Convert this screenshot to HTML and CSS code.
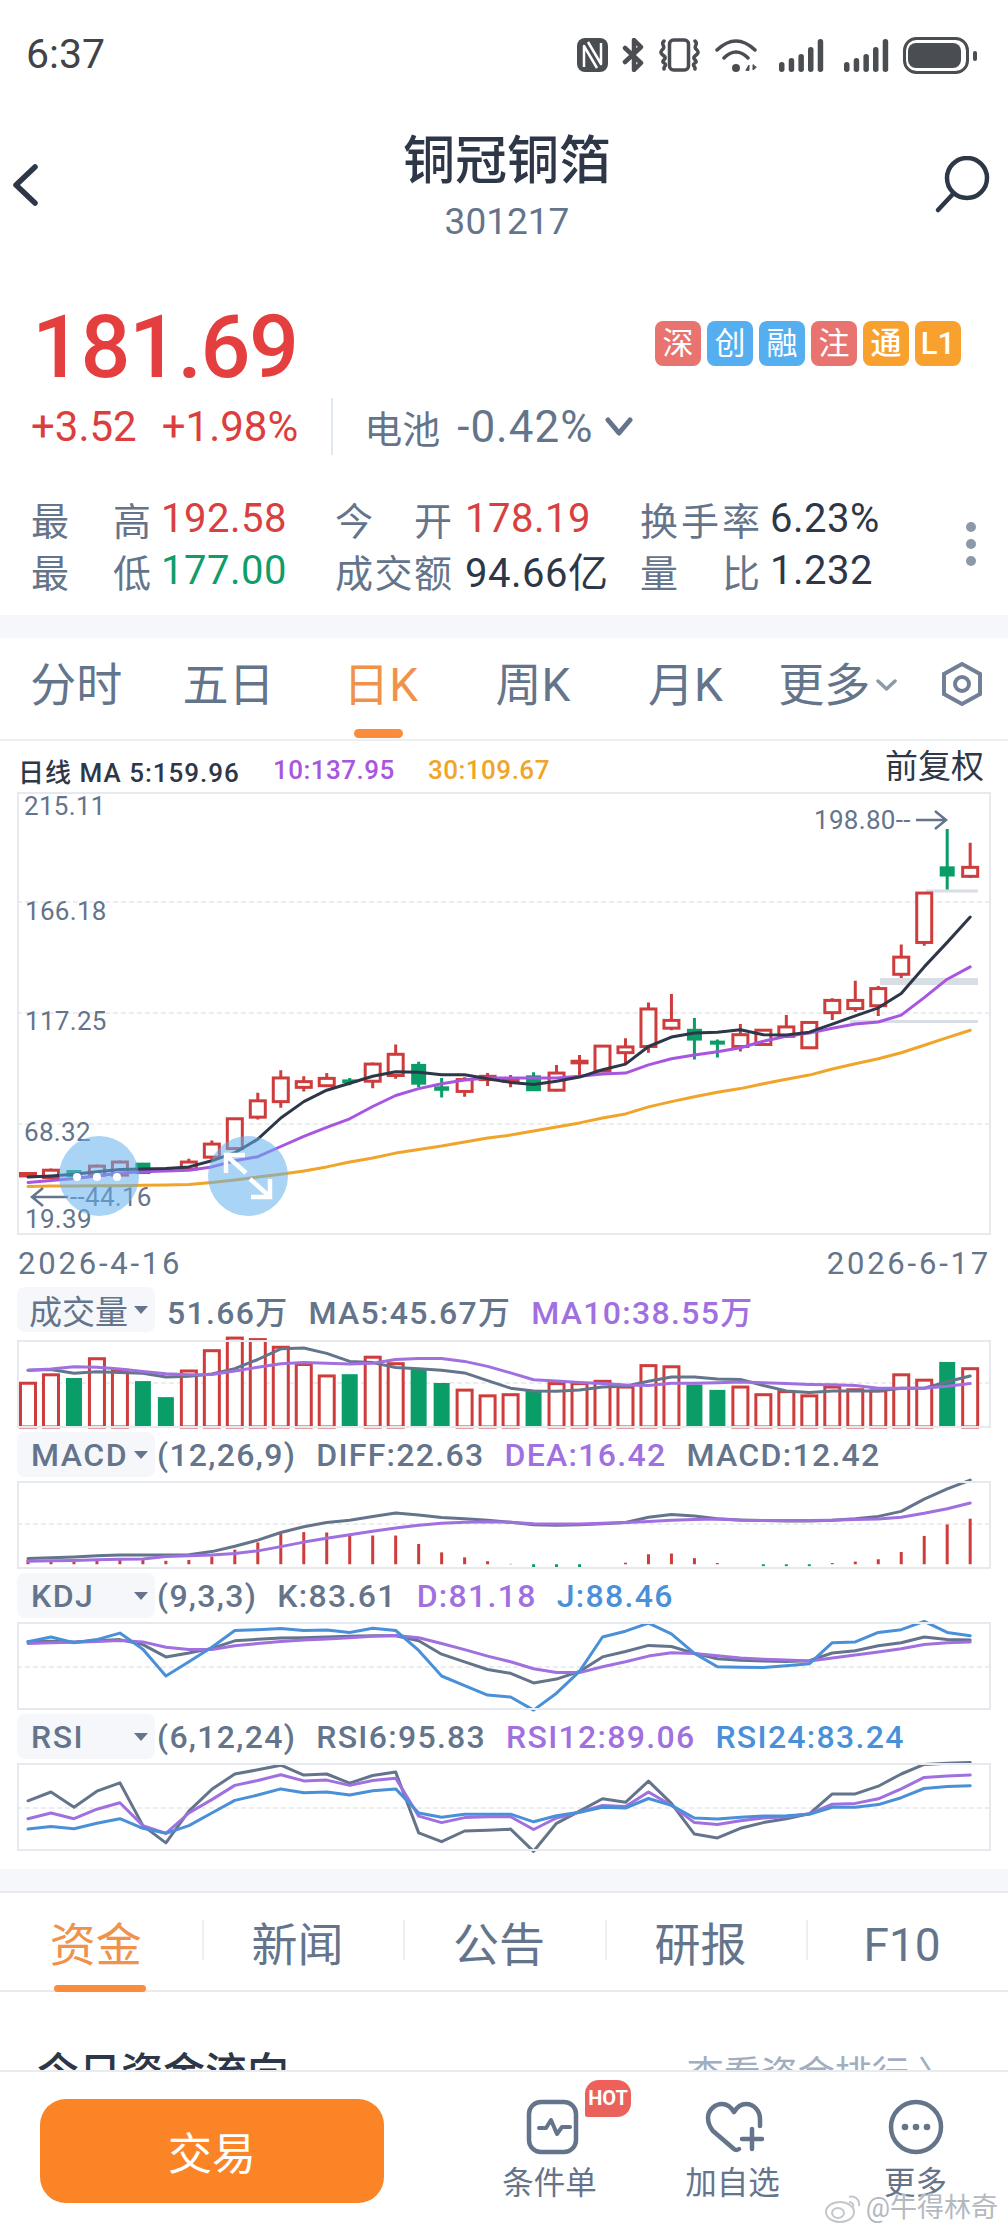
FILE: index.html
```html
<!DOCTYPE html>
<html lang="zh-CN">
<head>
<meta charset="utf-8">
<title>铜冠铜箔</title>
<link rel="stylesheet" href="styles.css">
</head>
<body>
<div class="page">
  <header class="status">
    <span class="clock">6:37</span>
    <div class="status-icons">
      <svg width="33" height="34" viewBox="0 0 33 34" class="nfc"><rect x="1" y="0" width="31" height="34" rx="8"/><path d="M8 29V8l13 22M25 5v21L12 4"/></svg>
      <svg width="24" height="34" viewBox="0 0 24 34" class="st heavy"><path d="M3 10l16 15-7 7V2l7 7L3 24"/></svg>
      <svg width="43" height="34" viewBox="0 0 43 34" class="st"><rect x="10.500" y="2" width="19" height="30" rx="4"/><path d="M5 3C1 6 7 8 4 11S1 15 5 18 1 23 5 25s-1 4 0 6M36 3c4 3-2 5 1 8s3 4-1 7 4 5 0 7 1 4 0 6"/></svg>
      <svg width="51" height="34" viewBox="0 0 51 34" class="st"><path d="M2 12Q21-6 40 12M9 20Q21 8 33 20"/><circle cx="21" cy="30" r="4" class="solid"/><path d="M31 32l3-5v5zM38 27v5l3-2.500z" class="hair"/></svg>
      <svg width="52" height="34" viewBox="0 0 52 34" class="bars"><rect x="0" y="24" width="5.500" height="10" rx="2.700"/><rect x="9.700" y="20" width="5.500" height="14" rx="2.700"/><rect x="19.400" y="16" width="5.500" height="18" rx="2.700"/><rect x="29" y="9" width="5.500" height="25" rx="2.700"/><rect x="38.700" y="1" width="5.500" height="33" rx="2.700"/></svg>
      <svg width="46" height="34" viewBox="0 0 46 34" class="bars"><rect x="0" y="24" width="5.500" height="10" rx="2.700"/><rect x="9.700" y="20" width="5.500" height="14" rx="2.700"/><rect x="19.400" y="16" width="5.500" height="18" rx="2.700"/><rect x="29" y="9" width="5.500" height="25" rx="2.700"/><rect x="38.700" y="1" width="5.500" height="33" rx="2.700"/></svg>
      <svg width="74" height="37" viewBox="0 0 74 37" class="batt"><rect x="1.500" y="1.500" width="63" height="34" rx="12" class="shell"/><rect x="5" y="6" width="53" height="25" rx="8"/><rect x="70" y="14" width="4" height="10" rx="2"/></svg>
    </div>
  </header>

  <nav class="nav">
    <div class="nav-side">
      <svg width="28" height="44" viewBox="0 0 28 44" class="back"><path d="M24 4L5 22l19 18"/></svg>
    </div>
    <div class="nav-title">
      <h1>铜冠铜箔</h1>
      <p>301217</p>
    </div>
    <div class="nav-side end">
      <svg width="56" height="58" viewBox="0 0 56 58" class="search"><circle cx="33" cy="22" r="20"/><path d="M19 38L4 54"/></svg>
    </div>
  </nav>

  <section class="quote">
    <div class="price-row">
      <div class="price">181.69</div>
      <div class="tags">
        <span class="tag red">深</span><span class="tag blue">创</span><span class="tag blue">融</span><span class="tag red">注</span><span class="tag amber">通</span><span class="tag amber">L1</span>
      </div>
    </div>
    <div class="change-row">
      <span class="up">+3.52</span>
      <span class="up pct">+1.98%</span>
      <i class="vline"></i>
      <span class="sector">电池</span>
      <span class="sector-val">-0.42%</span>
      <svg width="28" height="20" viewBox="0 0 28 20" class="drop"><path d="M3 3l11 13L25 3"/></svg>
    </div>
    <div class="stats-wrap">
      <div class="stats">
        <div class="cell c1"><span class="lab">最高</span><span class="val up">192.58</span></div>
        <div class="cell c2"><span class="lab">今开</span><span class="val up">178.19</span></div>
        <div class="cell c3"><span class="lab">换手率</span><span class="val dark">6.23%</span></div>
        <div class="cell c1"><span class="lab">最低</span><span class="val down">177.00</span></div>
        <div class="cell c2"><span class="lab">成交额</span><span class="val dark">94.66亿</span></div>
        <div class="cell c3"><span class="lab">量比</span><span class="val dark">1.232</span></div>
      </div>
      <div class="dots"><i></i><i></i><i></i></div>
    </div>
  </section>

  <div class="band"></div>

  <div class="tabs">
    <span class="tab">分时</span>
    <span class="tab">五日</span>
    <span class="tab on">日K</span>
    <span class="tab">周K</span>
    <span class="tab">月K</span>
    <span class="tab">更多<svg width="21" height="12" viewBox="0 0 21 12" class="tab-caret"><path d="M2 2l8.500 8L19 2"/></svg></span>
    <svg width="40" height="44" viewBox="0 0 40 44" class="hex"><path d="M20 2l18 10v20L20 42 2 32V12z"/><circle cx="20" cy="22" r="7"/></svg>
  </div>

  <section class="chart">
    <div class="ma-row">
      <span class="ma-main">日线 MA 5:159.96</span>
      <span class="ma-10">10:137.95</span>
      <span class="ma-30">30:109.67</span>
      <span class="adj">前复权</span>
    </div>
    <div class="frame">
      <svg id="kline" width="974" height="443" viewBox="17 792 974 443">
        <g class="grid"><path d="M17 902H991M17 1013H991M17 1124H991"/></g>
        <g class="levels"><path d="M926 891H978" class="lv slim"/><path d="M880 981.500H978" class="lv"/><path d="M850 1021.500H978" class="lv slim"/></g>
        <g id="candles"></g>
        <g id="malines"></g>
        <g class="axis">
          <text x="24" y="815">215.11</text>
          <text x="25" y="920">166.18</text>
          <text x="25" y="1030">117.25</text>
          <text x="24" y="1141">68.32</text>
          <text x="25" y="1228">19.39</text>
          <text x="814" y="829">198.80--</text>
          <text x="70" y="1206">--44.16</text>
        </g>
        <path d="M916 820H946M935 811l11 9-11 9M68 1197H32M43 1188l-11 9 11 9" class="arrow"/>
        <circle cx="99" cy="1176" r="40" class="bubble"/>
        <circle cx="248" cy="1176" r="40" class="bubble"/>
        <g class="bubble-dots"><circle cx="77" cy="1177" r="4"/><circle cx="97" cy="1177" r="4"/><circle cx="117" cy="1177" r="4"/></g>
        <path d="M226 1173v-18h19M228 1157l18 16M270 1179v18h-19M268 1195l-18-16" class="bubble-arrow"/>
      </svg>
    </div>
    <div class="dates"><span>2026-4-16</span><span>2026-6-17</span></div>

    <div class="ind-head vol">
      <div class="pill"><span>成交量</span><i class="caret"></i></div>
      <div class="ind-vals first">
        <span>51.66万</span><span>MA5:45.67万</span><span class="pu">MA10:38.55万</span>
      </div>
    </div>
    <div class="frame small"><svg id="volume" width="974" height="88" viewBox="17 1340 974 88"></svg></div>

    <div class="ind-head">
      <div class="pill latin"><span>MACD</span><i class="caret"></i></div>
      <div class="ind-vals">
        <span>(12,26,9)</span><span>DIFF:22.63</span><span class="pu">DEA:16.42</span><span>MACD:12.42</span>
      </div>
    </div>
    <div class="frame small"><svg id="macd" width="974" height="88" viewBox="17 1481 974 88"></svg></div>

    <div class="ind-head">
      <div class="pill latin"><span>KDJ</span><i class="caret"></i></div>
      <div class="ind-vals">
        <span>(9,3,3)</span><span>K:83.61</span><span class="pu">D:81.18</span><span class="bl">J:88.46</span>
      </div>
    </div>
    <div class="frame small"><svg id="kdj" width="974" height="88" viewBox="17 1622 974 88"></svg></div>

    <div class="ind-head">
      <div class="pill latin"><span>RSI</span><i class="caret"></i></div>
      <div class="ind-vals">
        <span>(6,12,24)</span><span>RSI6:95.83</span><span class="pu">RSI12:89.06</span><span class="bl">RSI24:83.24</span>
      </div>
    </div>
    <div class="frame small"><svg id="rsi" width="974" height="88" viewBox="17 1763 974 88"></svg></div>
  </section>

  <div class="band lower"></div>

  <div class="news-tabs">
    <span class="ntab on">资金</span>
    <span class="ntab">新闻</span>
    <span class="ntab">公告</span>
    <span class="ntab">研报</span>
    <span class="ntab">F10</span>
  </div>

  <section class="flow">
    <h2>今日资金流向</h2>
    <span class="flow-link">查看资金排行 〉</span>
  </section>

  <footer class="footer">
    <button class="trade">交易</button>
    <div class="act">
      <svg width="52" height="56" viewBox="0 0 52 56" class="ico shift"><rect x="5" y="3" width="47" height="50" rx="12"/><path d="M15 29h7l5-8 6 14 5-7h8" class="pulse"/></svg>
      <span>条件单</span>
      <b class="hot">HOT</b>
    </div>
    <div class="act">
      <svg width="58" height="56" viewBox="0 0 58 56" class="ico"><path d="M35 50q-3 2-5 0L9 32C5 27 4 23 4 19 4 11 11 5 18 5c5 0 9 3 12 8 3-5 7-8 12-8 8 0 14 7 14 15v7"/><path d="M48 30v20M38 40h20"/></svg>
      <span>加自选</span>
    </div>
    <div class="act">
      <svg width="56" height="56" viewBox="0 0 56 56" class="ico"><circle cx="28" cy="28" r="25"/><g class="more-dots"><circle cx="17" cy="28" r="3.300"/><circle cx="28" cy="28" r="3.300"/><circle cx="39" cy="28" r="3.300"/></g></svg>
      <span>更多</span>
    </div>
  </footer>

  <div class="mark">
    <svg width="36" height="30" viewBox="0 0 36 30" class="mark-logo"><ellipse cx="15" cy="19" rx="14" ry="10"/><ellipse cx="13" cy="20" rx="6" ry="5"/><path d="M24 4c6-2 11 3 10 9M24 9c3 0 5 2 4 5"/></svg>
    <span>@牛得林奇</span>
  </div>
</div>
<script src="chart.js"></script>
</body>
</html>
```
FILE: styles.css
```css
* { box-sizing: border-box; margin: 0; padding: 0; }
html, body { background: #fff; }
body {
  width: 1008px;
  font-family: Roboto, "Noto Sans CJK SC", sans-serif;
  color: #2d3748;
}
.page { position: relative; width: 1008px; height: 2232px; overflow: hidden; background: #fff; }

/* status bar */
.status { height: 108px; display: flex; justify-content: space-between; align-items: flex-start; padding: 30px 31px 0 26px; }
.clock { font-size: 41px; line-height: 48px; color: #3f444b; }
.status-icons { display: flex; gap: 13px; align-items: center; height: 48px; margin-top: 1px; }
.nfc rect { fill: #4a4d52; }
.nfc path { fill: none; stroke: #fff; stroke-width: 2.500; stroke-linejoin: round; }
.st { fill: none; stroke: #4a4d52; stroke-width: 3.500; stroke-linecap: round; stroke-linejoin: round; }
.st.heavy { stroke-width: 4.500; }
.st .solid { fill: #4a4d52; stroke: none; }
.st .hair { fill: #4a4d52; stroke-width: 1; }
.bars { fill: #4a4d52; }
.batt { fill: #4a4d52; }
.batt .shell { fill: none; stroke: #4a4d52; stroke-width: 3; }

/* nav */
.nav { height: 154px; display: flex; padding: 0 18px 0 11px; align-items: center; }
.nav-side { width: 67px; display: flex; }
.nav-side.end { width: 60px; justify-content: flex-end; }
.nav-title { flex: 1; text-align: center; padding: 24px 0 0 6px; align-self: flex-start; }
.nav-title h1 { font-size: 52px; line-height: 60px; font-weight: 500; color: #2d3748; }
.nav-title p { font-size: 37px; line-height: 44px; margin-top: 8px; color: #64748b; }
.back { fill: none; stroke: #2d3748; stroke-width: 5.500; stroke-linecap: round; stroke-linejoin: round; }
.search { fill: none; stroke: #2d3748; stroke-width: 4.500; stroke-linecap: round; }

/* quote */
.quote { height: 353px; padding-top: 33px; }
.price-row { height: 103px; display: flex; justify-content: space-between; align-items: center; padding: 0 47px 0 32px; }
.price { font-size: 88px; line-height: 100px; font-weight: 500; letter-spacing: -1.500px; color: #e53e3e; }
.tags { display: flex; gap: 6px; margin-top: -7px; }
.tag { width: 46px; height: 45px; border-radius: 8px; color: #fff; font-size: 31px; line-height: 45px; text-align: center; }
.tag.red { background: #e8736f; }
.tag.blue { background: #55aef0; }
.tag.amber { background: #f9a12f; font-weight: 500; }
.change-row { height: 57px; display: flex; align-items: center; padding-left: 31px; font-size: 42px; }
.up { color: #dc3d3d; }
.pct { margin-left: 25px; }
.vline { width: 2px; height: 57px; background: #e2e8f0; margin-left: 33px; }
.sector { margin-left: 31px; font-size: 38px; color: #64748b; }
.sector-val { margin-left: 17px; font-size: 44px; letter-spacing: 1px; color: #64748b; }
.drop { margin-left: 12px; fill: none; stroke: #64748b; stroke-width: 5; stroke-linecap: round; stroke-linejoin: round; }
.stats-wrap { display: flex; align-items: center; margin-top: 37px; padding: 0 32px 0 31px; }
.stats { flex: 1; display: grid; grid-template-columns: 304px 305px 1fr; grid-auto-rows: 52px; }
.cell { display: flex; align-items: center; gap: 10px; }
.lab { display: block; font-size: 38px; color: #64748b; text-align: justify; text-align-last: justify; }
.c1 .lab { width: 120px; }
.c2 { gap: 13px; }
.c2 .lab { width: 117px; }
.c3 { gap: 10px; }
.c3 .lab { width: 120px; }
.val { font-size: 40px; letter-spacing: .5px; white-space: nowrap; }
.up.val { color: #d84040; }
.down { color: #0f9d6a; }
.dark { color: #2d3748; }
.dots { display: flex; flex-direction: column; gap: 7px; }
.dots i { display: block; width: 10px; height: 10px; border-radius: 50%; background: #8c99a8; }

.band { height: 23px; background: #f5f7fa; }
.band.lower { height: 24px; margin-top: 18px; border-bottom: 2px solid #e8eaee; }

/* period tabs */
.tabs { height: 103px; display: flex; align-items: flex-start; padding-left: 0; border-bottom: 2px solid #edf0f3; }
.tab { position: relative; width: 152.300px; height: 100px; flex: none; text-align: center; font-size: 46px; line-height: 94px; color: #64748b; }
.tab.on { color: #f0924a; }
.tab.on::after { content: ""; position: absolute; left: 49px; bottom: 0; width: 49px; height: 9px; border-radius: 5px; background: #fb8c3c; }
.tab-caret { margin-left: 6px; vertical-align: 10px; fill: none; stroke: #8c99a8; stroke-width: 3.500; stroke-linecap: round; stroke-linejoin: round; }
.hex { margin: 24px 0 0 28px; fill: none; stroke: #718096; stroke-width: 4; }

/* chart */
.ma-row { height: 51px; display: flex; align-items: center; padding: 7px 24px 0 18px; font-size: 26px; letter-spacing: 1px; font-weight: 500; }
.ma-main { color: #2d3748; }
.ma-10, .ma-30 { letter-spacing: .5px; }
.ma-10 { margin-left: 33px; color: #a855e0; }
.ma-30 { margin-left: 33px; color: #f0a52a; }
.adj { margin-left: auto; margin-top: -13px; font-size: 33px; letter-spacing: 0; font-weight: 400; color: #2d3748; }

.frame { width: 974px; height: 443px; margin-left: 17px; outline: 2px solid #e6e9ee; outline-offset: -2px; }
.frame.small { height: 88px; }
.frame svg { display: block; overflow: visible; }
.grid path { fill: none; stroke: #e5e8ec; stroke-width: 1.500; stroke-dasharray: 5 3; }
.lv { fill: none; stroke: #d9dee4; stroke-width: 7; }
.lv.slim { stroke-width: 3; }
.axis text { font-size: 26px; letter-spacing: .3px; fill: #64748b; }
.arrow { fill: none; stroke: #64748b; stroke-width: 2.500; }
.bubble { fill: rgba(100, 176, 236, .55); }
.bubble-dots { fill: #fff; }
.bubble-arrow { fill: none; stroke: #fff; stroke-width: 4.500; }

.c-up { fill: #fff; stroke: #cf3c3c; stroke-width: 3; }
.c-dn { fill: #0b9d68; stroke: #0b9d68; stroke-width: 2; }
.wick-up { stroke: #cf3c3c; stroke-width: 3; fill: none; }
.wick-dn { stroke: #0b9d68; stroke-width: 3; fill: none; }
.line { fill: none; stroke-linejoin: round; stroke-linecap: round; stroke-width: 3; }
.l-black { stroke: #2d3748; stroke-width: 3; }
.l-ma10 { stroke: #a855e0; stroke-width: 3; }
.l-ma30 { stroke: #f0a52a; stroke-width: 3; }
.l-dark { stroke: #64748b; }
.l-purple { stroke: #a070e0; }
.l-blue { stroke: #4a90d9; }
.h-up { fill: #cf3c3c; }
.h-dn { fill: #0b9d68; }

.dates { height: 52px; display: flex; justify-content: space-between; align-items: center; padding: 4px 17px 0 18px; font-size: 31px; letter-spacing: 2.800px; color: #64748b; }
.ind-head { height: 53px; display: flex; align-items: flex-start; padding-top: 4px; }
.ind-head.vol { padding-top: 0; }
.pill { width: 138px; height: 45px; margin-left: 17px; flex: none; display: flex; align-items: center; justify-content: space-between; padding: 0 7px 0 12px; background: #f5f7fb; border-radius: 8px; font-size: 33px; color: #64748b; }
.pill.latin { padding-left: 14px; font-size: 32px; font-weight: 500; letter-spacing: 1.500px; }
.caret { width: 0; height: 0; border: 7px solid transparent; border-top: 8px solid #64748b; border-bottom: 0; }
.ind-vals { display: flex; gap: 20px; margin-left: 2px; height: 45px; align-items: center; font-size: 32px; font-weight: 500; letter-spacing: 1.300px; color: #64748b; white-space: nowrap; }
.ind-vals.first { margin-left: 12px; }
.pu { color: #a070e0; }
.bl { color: #4a90d9; }

/* news tabs */
.news-tabs { height: 99px; display: flex; border-bottom: 2px solid #e8eaee; }
.ntab { position: relative; flex: 1; height: 97px; padding-right: 10px; text-align: center; font-size: 46px; line-height: 104px; color: #64748b; }
.ntab + .ntab::before { content: ""; position: absolute; left: 0; top: 27px; width: 2px; height: 40px; background: #edf0f3; }
.ntab.on { color: #f0924a; }
.ntab.on::after { content: ""; position: absolute; left: 54px; bottom: -2px; width: 92px; height: 7px; border-radius: 4px; background: #fb8c3c; }

.flow { height: 78px; overflow: hidden; display: flex; justify-content: space-between; align-items: flex-start; padding: 52px 53px 0 37px; }
.flow h2 { font-size: 42px; line-height: 60px; font-weight: 500; color: #2d3748; }
.flow-link { font-size: 37px; line-height: 60px; margin-top: 2px; color: #a0aec0; }

/* footer */
.footer { height: 162px; display: flex; align-items: flex-start; border-top: 2px solid #e8ebef; padding: 27px 0 0 40px; background: #fff; }
.trade { width: 344px; height: 104px; border: 0; border-radius: 26px; background: #fb8427; color: #fff; font: 44px Roboto, "Noto Sans CJK SC", sans-serif; margin-right: 74px; }
.act { position: relative; width: 183px; flex: none; display: flex; flex-direction: column; align-items: center; font-size: 31.500px; line-height: 44px; color: #64748b; }
.act span { margin-top: 7px; }
.ico { overflow: visible; fill: none; stroke: #64748b; stroke-width: 4.500; stroke-linecap: round; stroke-linejoin: round; }
.ico .pulse { stroke-width: 4; }
.more-dots { fill: #64748b; stroke: none; }
.hot { position: absolute; left: 127px; top: -19px; width: 46px; height: 37px; background: linear-gradient(#f0605a, #e9625c); border-radius: 14px 14px 14px 2px; color: #fff; font-size: 20px; font-weight: 700; line-height: 37px; text-align: center; }

.mark { position: absolute; right: 10px; top: 2192px; display: flex; align-items: center; gap: 5px; font-size: 27px; line-height: 32px; color: #b4b9c0; text-shadow: 0 0 2px #fff, 0 0 3px #fff; }
.mark-logo { fill: rgba(255, 255, 255, .7); stroke: #c4c8cd; stroke-width: 2; }
```
FILE: chart.js
```javascript
(function () {
  var NS = 'http://www.w3.org/2000/svg';
  function px(i) { return 28 + i * 22.98; }
  function mainY(z) { return 620 + z / 2.45; }
  function lowY(z) { return 1260 + z / 2.613; }

  function el(parent, tag, attrs) {
    var n = document.createElementNS(NS, tag);
    for (var k in attrs) n.setAttribute(k, attrs[k]);
    parent.appendChild(n);
    return n;
  }
  function poly(parent, vals, conv, cls) {
    var pts = vals.map(function (v, i) { return px(i).toFixed(1) + ',' + conv(v).toFixed(1); }).join(' ');
    el(parent, 'polyline', { points: pts, 'class': 'line ' + cls });
  }
  function grid(svg, y) {
    var g = el(svg, 'g', { 'class': 'grid' });
    el(g, 'path', { d: 'M17 ' + y + 'H991' });
  }

  // [high, bodyTop, bodyBottom, low, up?]  in crop units, converted below
  var K = [
    [1356,1356,1362,1362,1],[1344,1348,1366,1368,1],[1350,1350,1362,1362,0],[1334,1338,1360,1362,1],[1324,1328,1360,1362,1],
    [1330,1332,1355,1355,0],[1344,1344,1347,1347,0],[1320,1328,1345,1350,1],[1275,1284,1316,1322,1],[1220,1222,1295,1298,1],
    [1158,1178,1218,1224,1],[1103,1122,1180,1195,1],[1118,1131,1145,1155,1],[1110,1123,1141,1141,1],[1122,1128,1132,1140,0],
    [1084,1088,1130,1147,1],[1040,1064,1116,1124,1],[1082,1090,1136,1145,0],[1122,1145,1151,1170,0],[1120,1126,1155,1168,1],
    [1110,1118,1126,1142,1],[1115,1125,1130,1145,1],[1108,1118,1152,1152,0],[1090,1110,1152,1155,1],[1066,1081,1085,1120,1],
    [1042,1044,1105,1108,1],[1025,1046,1060,1090,1],[937,953,1045,1060,1],[916,981,1000,1005,1],[975,1004,1028,1077,0],
    [1028,1033,1038,1072,0],[990,1016,1045,1057,1],[1003,1005,1040,1042,1],[968,997,1020,1022,1],[984,986,1048,1050,1],
    [927,932,962,980,1],[884,932,952,960,1],[897,903,945,970,1],[795,826,868,877,1],[667,669,790,798,1],[512,606,626,660,0],[546,606,628,632,1]
  ];
  var candles = document.getElementById('candles');
  K.forEach(function (c, i) {
    var x = px(i), up = c[4];
    var t = mainY(c[1]), b = mainY(c[2]);
    el(candles, 'path', { d: 'M' + x + ' ' + mainY(c[0]) + 'V' + t + 'M' + x + ' ' + b + 'V' + mainY(c[3]), 'class': up ? 'wick-up' : 'wick-dn' });
    var w = up ? 15 : 13;
    el(candles, 'rect', { x: x - w / 2, y: t, width: w, height: Math.max(b - t, 1), 'class': up ? 'c-up' : 'c-dn' });
  });

  var ma = document.getElementById('malines');
  poly(ma, [1388,1387,1387,1386,1386,1385,1384,1383,1378,1372,1365,1358,1350,1340,1328,1318,1306,1297,1289,1279,1269,1262,1252,1242,1232,1220,1210,1193,1180,1168,1157,1148,1136,1125,1115,1100,1087,1075,1060,1042,1023,1005], mainY, 'l-ma30');
  poly(ma, [1378,1373,1368,1362,1355,1352,1350,1348,1340,1325,1315,1290,1265,1243,1222,1192,1165,1148,1136,1127,1122,1122,1122,1122,1118,1112,1110,1090,1075,1066,1058,1048,1032,1020,1012,1000,990,985,968,925,880,850], mainY, 'l-ma10');
  poly(ma, [1365,1362,1358,1352,1346,1345,1344,1340,1325,1305,1272,1220,1180,1152,1135,1118,1107,1108,1114,1114,1124,1133,1138,1130,1120,1102,1088,1045,1022,1012,1010,1004,1016,1017,1010,990,970,950,915,850,790,728], mainY, 'l-black');

  // volume
  var vol = document.getElementById('volume');
  grid(vol, 1383);
  var V = [[322,1],[300,1],[311,0],[258,1],[288,1],[319,0],[361,0],[290,1],[237,1],[204,1],[208,1],[228,1],[273,1],[303,1],[301,0],[254,1],[271,1],[285,0],[324,0],[340,1],[355,1],[352,1],[342,0],[323,1],[323,1],[317,1],[332,1],[276,1],[279,1],[328,0],[342,0],[332,1],[352,1],[344,1],[355,1],[332,1],[339,1],[342,1],[300,1],[314,1],[269,0],[284,1]];
  V.forEach(function (v, i) {
    var x = px(i), t = lowY(v[0]), w = v[1] ? 15 : 14;
    el(vol, 'rect', { x: x - w / 2, y: t, width: w, height: 1427 - t, 'class': v[1] ? 'c-up' : 'c-dn' });
  });
  poly(vol, [288,286,296,292,294,296,306,304,298,284,260,232,230,244,265,268,281,284,288,295,315,335,342,343,340,332,330,317,306,306,311,312,328,342,346,342,342,342,335,335,318,303], lowY, 'l-dark');
  poly(vol, [288,285,279,280,285,291,297,300,299,290,280,271,268,270,272,270,260,257,257,265,278,295,313,316,320,323,327,328,322,322,321,319,321,323,325,326,328,335,335,335,330,323], lowY, 'l-purple');

  // macd
  var macd = document.getElementById('macd');
  grid(macd, 1524);
  var H = [783,785,786,785,783,782,786,784,775,757,738,716,711,712,720,720,720,742,764,777,787,794,806,806,803,795,791,769,767,779,792,795,800,800,800,792,788,782,763,721,691,676];
  var zero = lowY(795);
  H.forEach(function (z, i) {
    var y = lowY(z), dn = z > 795;
    el(macd, 'rect', { x: px(i) - 1.5, y: Math.min(y, zero), width: 3, height: Math.abs(y - zero), 'class': dn ? 'h-dn' : 'h-up' });
  });
  poly(macd, [780,778,776,773,771,771,771,770,762,748,732,712,697,686,680,670,661,666,673,676,680,685,692,693,692,689,686,672,665,669,676,679,681,682,682,680,676,670,657,625,598,575], lowY, 'l-dark');
  poly(macd, [787,786,785,783,782,781,775,773,771,767,760,749,737,727,718,709,700,693,688,685,684,685,689,690,690,688,686,683,680,678,677,680,681,681,681,680,678,677,672,662,650,635], lowY, 'l-purple');

  // kdj
  var kdj = document.getElementById('kdj');
  grid(kdj, 1667);
  poly(kdj, [997,996,998,995,992,1005,1037,1027,1015,995,991,988,987,985,983,982,982,995,1030,1050,1070,1080,1105,1095,1075,1037,1023,1007,1010,1028,1042,1046,1048,1049,1047,1027,1021,1008,1000,985,992,993], lowY, 'l-dark');
  poly(kdj, [1002,1000,999,997,994,998,1012,1018,1018,1008,1002,997,993,990,987,983,981,987,1002,1018,1035,1050,1068,1078,1078,1063,1050,1035,1026,1028,1034,1040,1043,1045,1048,1040,1032,1024,1016,1005,1000,998], lowY, 'l-purple');
  poly(kdj, [997,985,1000,992,975,1017,1087,1050,1012,968,966,963,968,967,973,962,968,1020,1087,1112,1137,1142,1176,1132,1075,985,970,949,977,1028,1063,1064,1065,1060,1055,1000,998,973,966,944,973,982], lowY, 'l-blue');

  // rsi
  var rsi = document.getElementById('rsi');
  grid(rsi, 1808);
  poly(rsi, [1413,1390,1430,1388,1366,1478,1523,1440,1383,1343,1332,1320,1346,1343,1367,1347,1338,1497,1520,1492,1490,1487,1545,1472,1440,1408,1417,1362,1420,1500,1510,1485,1470,1460,1447,1395,1395,1375,1343,1318,1315,1313], lowY, 'l-dark');
  poly(rsi, [1460,1445,1460,1435,1418,1478,1498,1445,1410,1373,1360,1345,1361,1359,1373,1360,1354,1453,1470,1457,1455,1455,1488,1458,1443,1425,1428,1390,1425,1470,1475,1465,1458,1455,1447,1422,1420,1408,1382,1352,1348,1346], lowY, 'l-purple');
  poly(rsi, [1487,1480,1486,1472,1460,1485,1498,1478,1445,1412,1398,1382,1392,1390,1398,1387,1382,1445,1456,1448,1448,1448,1468,1452,1443,1430,1432,1407,1425,1458,1461,1456,1453,1452,1448,1430,1430,1423,1405,1381,1376,1374], lowY, 'l-blue');
})();
```
